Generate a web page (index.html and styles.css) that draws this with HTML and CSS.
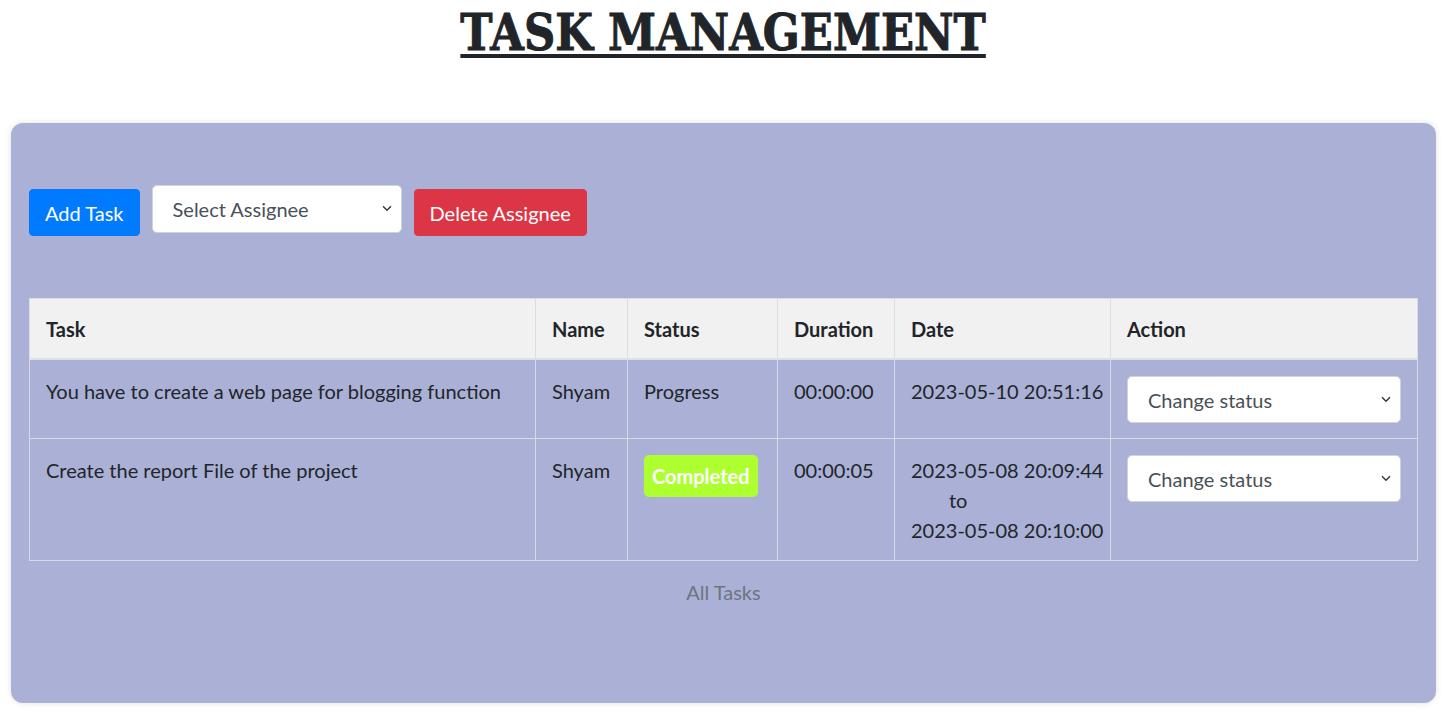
FILE: index.html
```html
<!DOCTYPE html>
<html>
<head>
<meta charset="utf-8">
<link rel="stylesheet" href="styles.css">
</head>
<body>
<h1 class="title"><span class="title-text">TASK MANAGEMENT</span></h1>
<div class="panel">
  <div class="toolbar">
    <button class="btn btn-blue">Add Task</button>
    <div class="select-wrap assignee">
      <select class="sel"><option>Select Assignee</option></select>
      <svg class="chev" width="12" height="12" viewBox="0 0 12 12"><path d="M2 4.2 L6 8.2 L10 4.2" fill="none" stroke="#343a40" stroke-width="1.5"/></svg>
    </div>
    <button class="btn btn-red">Delete Assignee</button>
  </div>
  <table class="tasks">
    <caption>All Tasks</caption>
    <thead>
      <tr>
        <th class="c-task">Task</th>
        <th class="c-name">Name</th>
        <th class="c-status">Status</th>
        <th class="c-dur">Duration</th>
        <th class="c-date">Date</th>
        <th class="c-action">Action</th>
      </tr>
    </thead>
    <tbody>
      <tr>
        <td>You have to create a web page for blogging function</td>
        <td>Shyam</td>
        <td>Progress</td>
        <td>00:00:00</td>
        <td class="date">2023-05-10 20:51:16</td>
        <td>
          <div class="select-wrap">
            <select class="sel sel-row"><option>Change status</option></select>
            <svg class="chev" width="12" height="12" viewBox="0 0 12 12"><path d="M2 4.2 L6 8.2 L10 4.2" fill="none" stroke="#343a40" stroke-width="1.5"/></svg>
          </div>
        </td>
      </tr>
      <tr>
        <td>Create the report File of the project</td>
        <td>Shyam</td>
        <td><span class="badge">Completed</span></td>
        <td>00:00:05</td>
        <td class="date">2023-05-08 20:09:44<br><span class="to">to</span><br>2023-05-08 20:10:00</td>
        <td>
          <div class="select-wrap">
            <select class="sel sel-row"><option>Change status</option></select>
            <svg class="chev" width="12" height="12" viewBox="0 0 12 12"><path d="M2 4.2 L6 8.2 L10 4.2" fill="none" stroke="#343a40" stroke-width="1.5"/></svg>
          </div>
        </td>
      </tr>
    </tbody>
  </table>
</div>
</body>
</html>
```
FILE: styles.css
```css
* { box-sizing: border-box; }
body {
  margin: 0;
  padding: 0 16px 13px 11px;
  background: #fff;
  font-family: "Lato", "Open Sans", sans-serif;
  font-size: 20px;
  line-height: 30px;
  color: #212529;
}
.title {
  margin: 0;
  padding-top: 3px;
  height: 123px;
  text-align: center;
  font-family: "DejaVu Serif", "Liberation Serif", serif;
  font-weight: bold;
  font-size: 51px;
  line-height: 58px;
  color: #212529;
}
.title-text {
  display: inline-block;
  transform: scaleX(0.85);
  -webkit-text-stroke: 1px #212529;
  text-decoration: underline;
  text-decoration-thickness: 4px;
  text-underline-offset: 4px;
}
.panel {
  background: #abb1d6;
  border-radius: 12px;
  box-shadow: 0 0 6px rgba(0,0,0,0.12);
  padding: 62px 18px 80px 18px;
  height: 580px;
}
.toolbar {
  display: flex;
  align-items: flex-start;
  gap: 12px;
  height: 113px;
}
.btn {
  font-family: inherit;
  font-size: 20px;
  line-height: 30px;
  color: #fff;
  border: 1px solid transparent;
  border-radius: 4px;
  padding: 7px 15px;
  margin-top: 4px;
  height: 47px;
}
.btn-blue { background: #007bff; border-color: #007bff; }
.btn-red { background: #dc3545; border-color: #dc3545; }
.select-wrap {
  position: relative;
  display: block;
}
.assignee { width: 250px; }
.sel {
  -webkit-appearance: none;
  appearance: none;
  width: 100%;
  height: 48px;
  font-family: inherit;
  font-size: 20px;
  color: #495057;
  background: #fff;
  border: 1px solid #ced4da;
  border-radius: 5px;
  padding: 0 30px 0 20px;
}
.sel-row { height: 47px; }
.chev {
  position: absolute;
  right: 9px;
  top: 17px;
  pointer-events: none;
}
.tasks {
  width: 100%;
  border-collapse: collapse;
  caption-side: bottom;
  table-layout: fixed;
}
.tasks caption {
  color: #6c757d;
  padding-top: 16px;
  text-align: center;
}
.tasks th, .tasks td {
  border: 1px solid #d8dae8;
  padding: 16px 16px 15px;
  text-align: left;
  vertical-align: top;
}
.tasks th {
  background: #f1f1f1;
  font-weight: bold;
  padding: 15px 16px 14px;
  border-color: #dcdde3;
  border-bottom: 2px solid #dee2e6;
  white-space: nowrap;
}
.tasks td.date { white-space: nowrap; }
.c-task { width: 506px; }
.c-name { width: 92px; }
.c-status { width: 150px; }
.c-dur { width: 117px; }
.c-date { width: 216px; }
.badge {
  display: inline-block;
  background: #adff2f;
  color: #fff;
  font-weight: bold;
  border-radius: 5px;
  padding: 6px 8px;
  line-height: 30px;
}
.to { padding-left: 38px; }
```
